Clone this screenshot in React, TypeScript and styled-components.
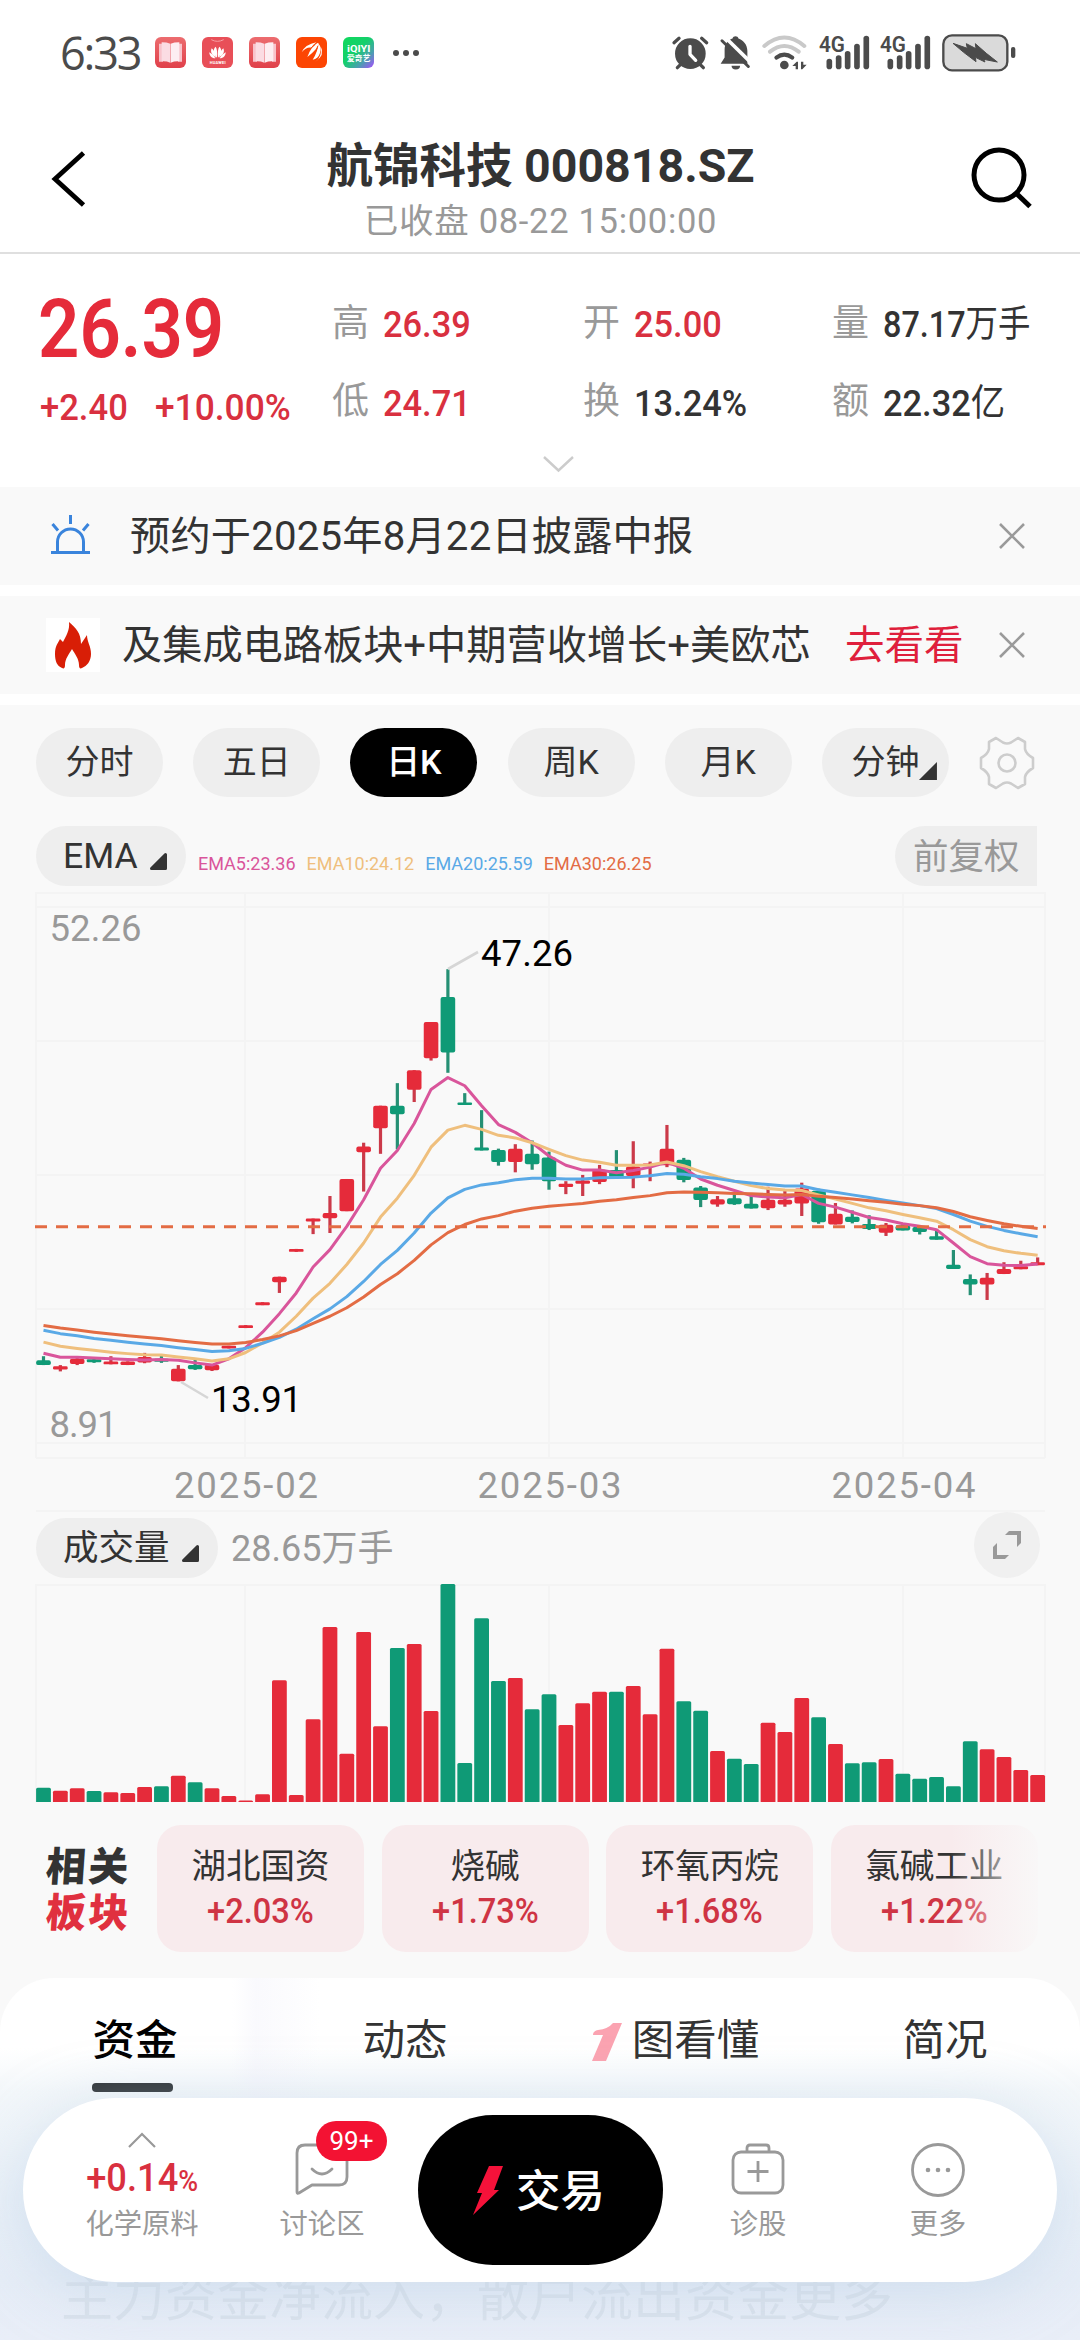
import React from 'react';
import styled, { createGlobalStyle } from 'styled-components';

const RED = '#e52b3a';
const TEXT_RED = '#d9303f';
const GREEN = '#0f9a76';
const INK = '#333';
const GRAY = '#999';
const PANEL = '#f9f9f9';
const STATUS = '#4b4b4b';

const GlobalStyle = createGlobalStyle`
  * { box-sizing: border-box; }
  body {
    margin: 0;
    background: #fff;
    font-family: Roboto, "Noto Sans CJK SC", sans-serif;
    color: ${INK};
  }
  svg { display: block; flex: none; overflow: visible; }
`;

const Screen = styled.div`
  position: relative;
  width: 1080px;
  height: 2340px;
  overflow: hidden;
  display: flex;
  flex-direction: column;
  background: #fff;
  white-space: nowrap;
`;

/* ---------- status bar ---------- */

const StatusBar = styled.div`
  height: 105px;
  flex: none;
  display: flex;
  align-items: center;
  padding: 0 64px 0 60px;
`;

const Clock = styled.div`
  width: 95px;
  font: 500 45px/60px "Open Sans", sans-serif;
  letter-spacing: -2.2px;
  color: ${STATUS};
`;

const AppIcons = styled.div`
  display: flex;
  gap: 16px;
`;

const MoreDots = styled.div`
  display: flex;
  gap: 4px;
  margin: 0 auto 0 19px;
  i { width: 6px; height: 6px; border-radius: 50%; background: ${STATUS}; }
`;

const SystemIcons = styled.div`
  display: flex;
  align-items: center;
  gap: 11.4px;
`;

const BookIcon = () => (
  <svg width="31" height="31" viewBox="0 0 93 93">
    <defs>
      <linearGradient id="book" x2="0" y2="1">
        <stop offset="0" stopColor="#ec6c6f" />
        <stop offset="1" stopColor="#e0404a" />
      </linearGradient>
    </defs>
    <rect width="93" height="93" rx="18" fill="url(#book)" />
    <path d="M12 20h12v54H12zM69 20h12v54H69z" fill="#f8c3cb" />
    <path d="M20 16q16 0 26 4v57q-12-5-26-4z" fill="#fbdce3" />
    <path d="M73 16q-16 0-26 4v57q12-5 26-4z" fill="#fdeef2" />
  </svg>
);

const HuaweiIcon = () => (
  <svg width="31" height="31" viewBox="0 0 93 93">
    <rect width="93" height="93" rx="18" fill="#e84f58" />
    <path d="M28 8q18 10 37 0" fill="none" stroke="#f6a0a4" strokeWidth="3" />
    <g fill="#fff">
      <path d="M45 62C34 50 32 36 41 29q6 8 4 33zM48 62C59 50 61 36 52 29q-6 8-4 33z" />
      <path d="M42 62C30 54 24 46 29 34q10 8 13 28zM51 62C63 54 69 46 64 34q-10 8-13 28z" />
      <path d="M40 64C28 64 22 56 22 46q12 6 18 18zM53 64C65 64 71 56 71 46q-12 6-18 18z" />
    </g>
    <text x="23" y="80" fontSize="12" fontWeight="700" fill="#fff" textLength="48">HUAWEI</text>
  </svg>
);

const BrokerIcon = () => (
  <svg width="31" height="31" viewBox="0 0 93 93">
    <rect width="93" height="93" rx="18" fill="#fc4503" />
    <g fill="#fff">
      <path d="M17 46Q28 22 61 16Q50 24 46 32Q30 30 17 46z" />
      <path d="M34 60Q46 26 66 17Q72 22 60 36Q48 50 34 60z" />
      <path d="M50 68Q66 42 67 20Q78 30 72 48Q66 66 50 68z" />
      <path d="M58 75Q80 58 74 28Q88 54 58 75z" />
    </g>
    <path d="M30 54Q42 32 58 22M46 64Q60 46 66 26" stroke="#fc4503" strokeWidth="3" fill="none" />
  </svg>
);

const IqiyiIcon = () => (
  <svg width="31" height="31" viewBox="0 0 93 93">
    <defs>
      <linearGradient id="iqiyi" x2="1" y2="1">
        <stop offset="0" stopColor="#10d95c" />
        <stop offset=".45" stopColor="#14cf6c" />
        <stop offset=".72" stopColor="#4a9fb0" />
        <stop offset="1" stopColor="#a94bff" />
      </linearGradient>
    </defs>
    <rect width="93" height="93" rx="18" fill="url(#iqiyi)" />
    <text x="12" y="44" fontSize="29" fontWeight="700" fill="#fff" textLength="70" lengthAdjust="spacingAndGlyphs">iQIYI</text>
    <text x="12" y="72" fontSize="23" fontWeight="700" fill="#fff" textLength="70">爱奇艺</text>
  </svg>
);

const ClockAlarmIcon = () => (
  <svg width="36.7" height="35.3" viewBox="50 44 110 106" fill="none" stroke={STATUS} strokeWidth="10" strokeLinecap="round">
    <circle cx="105" cy="100" r="46" fill={STATUS} stroke="none" />
    <path d="M104 78v24l17 18" stroke="#fff" strokeLinejoin="round" />
    <path d="M56 67l15-13M139 54l15 13M66 142l10-10M144 142l-10-10" />
  </svg>
);

const MuteIcon = () => (
  <svg width="31" height="35.3" viewBox="194 44 94 106">
    <path d="M196 131l12-19V86c0-16 12-28 24-32 2-9 16-9 18 0 14 5 27 18 27 38v39z" fill={STATUS} />
    <path d="M208 49l90 88" stroke="#fff" strokeWidth="11" />
    <path d="M200 61l80 78" stroke={STATUS} strokeWidth="9" strokeLinecap="round" />
    <path d="M229 137h26a13 11 0 0 1-26 0z" fill={STATUS} />
  </svg>
);

const WifiIcon = () => (
  <svg width="45" height="35.3" viewBox="320 42 135 106" fill="none" strokeWidth="12" strokeLinecap="round">
    <path d="M327 75Q387 24 447 75M344 92Q387 58 430 92" stroke="#c9c9c9" />
    <path d="M363 110Q387 92 411 110" stroke={STATUS} />
    <circle cx="387" cy="132" r="13" fill={STATUS} />
    <path d="M411 135l13-13h4v23h-7v-10zM454 131l-13 14h-4v-23h7v9z" fill={STATUS} />
  </svg>
);

const SignalIcon = () => (
  <svg width="50.3" height="35.3" viewBox="488 42 151 106" fill={STATUS}>
    <text x="488" y="93" fontSize="66" fontWeight="600" textLength="78" lengthAdjust="spacingAndGlyphs">4G</text>
    {[[519, 113], [547, 103], [574, 90], [602, 68], [630, 44]].map(([x, y]) => (
      <rect key={x} x={x - 8.5} y={y} width="17" height={145 - y} rx="8.5" />
    ))}
  </svg>
);

const BatteryIcon = () => (
  <svg width="74" height="38" viewBox="860 38 222 114">
    <rect x="864" y="42" width="192" height="105" rx="26" fill="#dadada" stroke={STATUS} strokeWidth="7" />
    <rect x="1067" y="77" width="13" height="33" rx="6" fill={STATUS} />
    <path d="M893 66l43 15-3-14 29 15-2-15 33 29 33 26-41-8 4 8-29-14 2 13-37-28z" fill={STATUS} stroke={STATUS} strokeWidth="3" />
  </svg>
);

/* ---------- header ---------- */

const Header = styled.header`
  height: 149px;
  flex: none;
  display: flex;
  justify-content: space-between;
  align-items: flex-start;
  padding: 36px 47px 0 47px;
  border-bottom: 2px solid #dfdfdf;
`;

const Titles = styled.div`
  display: flex;
  flex-direction: column;
  align-items: center;
  margin-left: 23px;
`;

const Title = styled.h1`
  margin: 0;
  font-size: 46.5px;
  line-height: 50px;
  font-weight: 700;
`;

const SubTitle = styled.div`
  margin-top: 10px;
  font-size: 34.5px;
  line-height: 40px;
  letter-spacing: 0.7px;
  color: ${GRAY};
`;

/* ---------- quote ---------- */

const Quote = styled.section`
  height: 233px;
  flex: none;
  display: flex;
  flex-direction: column;
  padding-top: 32px;
`;

const QuoteRow = styled.div`
  display: flex;
  padding-left: 40px;
  height: 157px;
`;

const PriceBlock = styled.div`
  width: 292px;
  padding-top: 4px;
  color: ${TEXT_RED};
  font-weight: 500;
`;

const Narrow = styled.span<{ $x?: number }>`
  display: inline-block;
  transform: scaleX(${p => p.$x ?? 0.93});
  transform-origin: 0 50%;
`;

const Price = styled.div`
  margin-left: -2px;
  font-size: 81px;
  line-height: 80px;
  font-weight: 600;
  color: ${RED};
`;

const Change = styled.div`
  margin-top: 18px;
  display: flex;
  font-size: 37px;
  line-height: 40px;
  span:first-child { width: 115px; }
`;

const Stats = styled.div`
  display: grid;
  grid-template-columns: 251px 249px 247px;
  grid-template-rows: 78.5px 78.5px;
`;

const Stat = styled.div<{ $up?: boolean }>`
  display: flex;
  align-items: center;
  font-size: 37px;
  line-height: 50px;
  font-weight: 500;
  color: ${p => (p.$up ? TEXT_RED : INK)};
`;

const StatLabel = styled.span`
  width: 51px;
  padding-bottom: 3px;
  font-size: 37px;
  font-weight: 400;
  color: ${GRAY};
`;

const Unit = styled.span`
  font-weight: 400;
`;

const ExpandArrow = styled.div`
  display: flex;
  padding: 12px 0 0 543px;
`;

/* ---------- notices ---------- */

const Notice = styled.div`
  height: 98px;
  flex: none;
  display: flex;
  align-items: center;
  padding: 0 55px 0 46px;
  margin-bottom: 11px;
  background: ${PANEL};
`;

const NoticeIcon = styled.div<{ $white?: boolean; $space: number }>`
  width: 54px;
  height: 54px;
  display: flex;
  align-items: center;
  justify-content: ${p => (p.$white ? 'center' : 'flex-start')};
  padding-left: ${p => (p.$white ? 0 : 5)}px;
  margin-right: ${p => p.$space}px;
  background: ${p => (p.$white ? '#fff' : 'transparent')};
`;

const NoticeText = styled.div<{ $w: number; $track?: number }>`
  width: ${p => p.$w}px;
  font-size: 40.2px;
  line-height: 57px;
  letter-spacing: ${p => p.$track ?? 0}px;
`;

const NoticeLink = styled.a`
  margin-left: 35px;
  font-size: 39.5px;
  line-height: 57px;
  color: #df1f3c;
`;

const CloseSvg = styled.svg`
  margin-left: auto;
`;

const CloseIcon = () => (
  <CloseSvg width="26" height="28" viewBox="0 0 26 28" stroke="#9a9a9a" strokeWidth="2.6">
    <path d="M1 2l24 24M25 2L1 26" />
  </CloseSvg>
);

/* ---------- chart ---------- */

const ChartPanel = styled.section`
  flex: none;
  height: 1273px;
  display: flex;
  flex-direction: column;
  padding-top: 23px;
  background: ${PANEL};
`;

const Periods = styled.div`
  display: flex;
  align-items: center;
  gap: 30.2px;
  padding-left: 36px;
`;

const Period = styled.div<{ $active?: boolean }>`
  position: relative;
  width: 127px;
  height: 69px;
  border-radius: 35px;
  text-align: center;
  font-size: 34px;
  line-height: 69px;
  font-weight: ${p => (p.$active ? 500 : 400)};
  color: ${p => (p.$active ? '#fff' : INK)};
  background: ${p => (p.$active ? '#000' : '#eee')};
`;

const Corner = styled.i`
  position: absolute;
  right: 12px;
  bottom: 17px;
  width: 18px;
  height: 18px;
  background: ${INK};
  clip-path: polygon(100% 0, 100% 100%, 0 100%);
`;

const ToolRow = styled.div`
  display: flex;
  align-items: center;
  height: 60px;
  margin: 29px 43px 6px 36px;
`;

const Picker = styled.div<{ $w: number; $top?: number }>`
  width: ${p => p.$w}px;
  height: 60px;
  margin-top: ${p => p.$top ?? 0}px;
  border-radius: 30px;
  display: flex;
  align-items: center;
  justify-content: space-between;
  padding: 0 18px 0 27px;
  font-size: 35.5px;
  line-height: 61px;
  background: #eee;
  svg { margin-top: 11px; }
`;

const Legend = styled.div`
  display: flex;
  gap: 11px;
  margin-left: 12px;
  padding-top: 15px;
  font-size: 18px;
  line-height: 20px;
`;

const LegendItem = styled.span<{ $c: string }>`
  color: ${p => p.$c};
`;

const Adjust = styled.div`
  margin-left: auto;
  width: 142px;
  height: 60px;
  padding-left: 18px;
  border-radius: 30px 0 0 30px;
  font-size: 35.5px;
  line-height: 63px;
  color: ${GRAY};
  background: #eee;
`;

const VolumeRow = styled.div`
  display: flex;
  align-items: flex-start;
  height: 72px;
  padding: 0 40px 0 36px;
`;

const VolumeValue = styled.div`
  margin: 7px 0 0 13px;
  font-size: 36px;
  line-height: 61px;
  color: ${GRAY};
`;

const FullScreen = styled.div`
  width: 66px;
  height: 66px;
  margin-left: auto;
  border-radius: 50%;
  display: flex;
  align-items: center;
  justify-content: center;
  background: #f0f0f0;
`;

const TriangleMark = () => (
  <svg width="18" height="18" viewBox="0 0 18 18">
    <path d="M15.5 1.5v14h-14z" fill={INK} stroke={INK} strokeWidth="3" strokeLinejoin="round" />
  </svg>
);

// [direction, high, body top, body bottom, low], all in plot units measured downwards
type Candle = [1 | 0, number, number, number, number];
const CANDLES: Candle[] = [
  [0, 1233, 1244, 1257, 1257], [1, 1257, 1260, 1269, 1274], [1, 1238, 1240, 1254, 1257], [0, 1236, 1241, 1249, 1251],
  [1, 1233, 1247, 1255, 1255], [1, 1247, 1247, 1257, 1257], [1, 1224, 1235, 1250, 1252], [0, 1230, 1240, 1248, 1251],
  [1, 1257, 1267, 1301, 1301], [0, 1239, 1257, 1268, 1270], [1, 1255, 1256, 1271, 1273], [1, 1205, 1205, 1212, 1212],
  [1, 1149, 1149, 1157, 1157], [1, 1087, 1087, 1095, 1095], [1, 1018, 1018, 1033, 1062], [1, 943, 943, 951, 951],
  [1, 861, 861, 869, 903], [1, 800, 846, 860, 900], [1, 754, 754, 841, 841], [1, 656, 666, 682, 788],
  [1, 556, 556, 617, 686], [0, 495, 556, 579, 674], [1, 460, 460, 513, 546], [1, 330, 330, 428, 434],
  [0, 187, 262, 412, 467], [0, 522, 547, 554, 554], [0, 568, 669, 677, 677], [0, 672, 676, 708, 718],
  [1, 660, 672, 708, 736], [0, 650, 686, 714, 729], [0, 680, 696, 760, 783], [1, 760, 767, 776, 795],
  [1, 743, 758, 767, 800], [1, 716, 729, 762, 768], [0, 676, 730, 750, 752], [1, 652, 720, 746, 779],
  [1, 707, 712, 718, 760], [1, 608, 672, 717, 722], [0, 697, 702, 757, 763], [0, 773, 777, 811, 830],
  [1, 800, 809, 823, 829], [0, 797, 806, 822, 824], [0, 800, 821, 834, 834], [1, 775, 810, 833, 838],
  [1, 781, 810, 823, 829], [1, 764, 780, 820, 854], [0, 780, 786, 871, 875], [1, 819, 848, 877, 877],
  [0, 839, 856, 870, 874], [0, 852, 876, 889, 892], [1, 873, 878, 899, 908], [0, 878, 879, 893, 893],
  [0, 883, 884, 897, 904], [0, 893, 909, 918, 918], [0, 946, 986, 997, 997], [0, 1012, 1024, 1039, 1068],
  [1, 1008, 1021, 1039, 1081], [1, 979, 997, 1011, 1011], [1, 975, 990, 998, 998], [1, 966, 979, 987, 987],
];

const EMA5 = [1225, 1236, 1236, 1238, 1240, 1242, 1243, 1242, 1244, 1251, 1257, 1240, 1210, 1168, 1118, 1062, 992, 945, 882, 810,
  725, 677, 604, 512, 480, 502, 556, 607, 628, 656, 692, 717, 730, 730, 737, 731, 722, 709, 725, 754,
  771, 785, 799, 803, 805, 796, 820, 830, 844, 858, 865, 875, 882, 891, 927, 964, 983, 987, 988, 984];
const EMA10 = [1195, 1206, 1212, 1217, 1222, 1226, 1229, 1230, 1235, 1240, 1246, 1240, 1223, 1197, 1168, 1125, 1076, 1036, 985, 927,
  857, 806, 744, 668, 622, 609, 620, 636, 643, 656, 674, 691, 703, 709, 717, 717, 716, 708, 718, 734,
  748, 760, 772, 780, 784, 785, 797, 808, 820, 832, 840, 850, 859, 868, 891, 918, 937, 948, 955, 960];
const EMA20 = [1163, 1172, 1178, 1185, 1190, 1195, 1200, 1204, 1210, 1215, 1220, 1218, 1212, 1198, 1182, 1160, 1132, 1105, 1072, 1031,
  985, 947, 900, 846, 805, 782, 770, 764, 756, 752, 752, 754, 754, 751, 750, 749, 745, 739, 741, 748,
  753, 760, 765, 769, 773, 773, 783, 790, 797, 804, 812, 819, 826, 834, 850, 868, 882, 893, 902, 910];
const EMA30 = [1150, 1157, 1162, 1168, 1173, 1178, 1182, 1186, 1191, 1196, 1200, 1200, 1196, 1188, 1178, 1164, 1144, 1125, 1102, 1073,
  1039, 1010, 974, 932, 899, 877, 862, 853, 841, 833, 828, 824, 820, 814, 810, 804, 799, 791, 789, 790,
  791, 793, 794, 796, 797, 796, 801, 804, 808, 813, 817, 822, 826, 832, 842, 856, 866, 875, 882, 888];

const LINES: [string, string, number[]][] = [
  ['EMA5:23.36', '#d9559b', EMA5],
  ['EMA10:24.12', '#efbf7d', EMA10],
  ['EMA20:25.59', '#5aa9e6', EMA20],
  ['EMA30:26.25', '#e36c44', EMA30],
];

const VOLUMES = [14.3, 11.3, 13.7, 11, 9.7, 9, 15, 15.7, 26.3, 19.7, 13.7, 6, 1.5, 7.7, 121.7, 7, 82.7, 175, 48.3, 170,
  75.7, 154, 158, 91, 218, 39, 183.7, 121, 124, 92.7, 107.7, 77, 98.7, 110.3, 110.3, 116, 87.7, 153.3, 100.7, 91.3,
  51, 43.3, 38, 79.3, 70, 104, 84.7, 58, 38.7, 39.7, 43, 28.3, 23.3, 25, 15.7, 60.7, 52.7, 45, 32, 27];

const cx = (i: number) => 43.5 + i * 16.85;
const py = (v: number) => 8 + v * 0.37;
const MONTH_X = [245, 549, 903];

const KChart = () => (
  <svg width="1080" height="620" viewBox="0 0 1080 620">
    <g stroke="#f4f4f4" strokeWidth="2">
      {[1, 15, 149, 283, 417, 551, 566, 619].map(y => <path key={y} d={`M36 ${y}H1045`} />)}
      {[36, ...MONTH_X, 1045].map(x => <path key={x} d={`M${x} 0V566`} />)}
    </g>
    {CANDLES.map(([up, hi, top, bot, lo], i) => {
      const c = up ? RED : GREEN;
      return (
        <g key={i} fill={c}>
          <rect x={cx(i) - 1.6} y={py(hi)} width="3.2" height={py(lo) - py(hi)} fill={up ? '#cb3a49' : '#259074'} />
          <rect x={cx(i) - 7.3} y={py(top)} width="14.6" height={py(bot) - py(top)} rx={Math.min(2, (bot - top) * 0.15)} />
        </g>
      );
    })}
    {LINES.map(([name, color, pts]) => (
      <polyline key={name} points={pts.map((v, i) => `${cx(i)},${py(v)}`).join(' ')} fill="none" stroke={color} strokeWidth="3" strokeLinejoin="round" />
    ))}
    <path d="M35 334.7H1046" stroke="#e36c44" strokeWidth="3" strokeDasharray="12 9" />
    <path d="M448 77l30-17M181 490l27 16" stroke="#d6d6d6" strokeWidth="2.6" />
    <g fontSize="36.5">
      <g fill={GRAY}>
        <text x="49.500" y="48.500" textLength="92">52.26</text>
        <text x="49.500" y="545" textLength="68">8.91</text>
        <text x="246" y="606" textAnchor="middle" textLength="144">2025-02</text>
        <text x="549.500" y="606" textAnchor="middle" textLength="144">2025-03</text>
        <text x="903.500" y="606" textAnchor="middle" textLength="144">2025-04</text>
      </g>
      <g fill="#000">
        <text x="481" y="73.500" textLength="92">47.26</text>
        <text x="211" y="519.500" textLength="91">13.91</text>
      </g>
    </g>
  </svg>
);

const VolumeChart = () => (
  <svg width="1080" height="218" viewBox="0 0 1080 218">
    <g stroke="#f4f4f4" strokeWidth="2">
      <path d="M36 1H1045" />
      {[36, ...MONTH_X, 1045].map(x => <path key={x} d={`M${x} 0V218`} />)}
    </g>
    {VOLUMES.map((h, i) => (
      <path
        key={i}
        d={`M${cx(i) - 7.4} 218V${219.5 - h}q0-1.5 1.5-1.5h11.8q1.5 0 1.5 1.5V218z`}
        fill={CANDLES[i][0] ? RED : GREEN}
      />
    ))}
  </svg>
);

/* ---------- related sectors ---------- */

const Sectors = styled.div`
  position: relative;
  display: flex;
  height: 127px;
  margin-top: 23px;
  padding-left: 46px;
  overflow: hidden;
  &::after {
    content: '';
    position: absolute;
    inset: 0 0 0 auto;
    width: 130px;
    background: linear-gradient(90deg, rgba(249, 249, 249, 0), ${PANEL} 78%);
  }
`;

const SectorTitle = styled.div`
  width: 111px;
  flex: none;
  padding-top: 20px;
  font-size: 40px;
  line-height: 46px;
  font-weight: 900;
  letter-spacing: 2.4px;
`;

const SectorTitleLine = styled.div<{ $c: string }>`
  width: 84px;
  transform: skewX(-4deg);
  color: ${p => p.$c};
`;

const SectorCard = styled.div`
  width: 207px;
  flex: none;
  margin-right: 17.6px;
  border-radius: 24px;
  padding-top: 19px;
  text-align: center;
  background: #f8ebed;
`;

const SectorName = styled.div`
  font-size: 34.5px;
  line-height: 44px;
`;

const SectorChange = styled.div`
  font-size: 34.5px;
  line-height: 47px;
  font-weight: 500;
  color: #cf3444;
  span { transform-origin: 50% 50%; }
`;

const SECTORS = [['湖北国资', '+2.03%'], ['烧碱', '+1.73%'], ['环氧丙烷', '+1.68%'], ['氯碱工业', '+1.22%'], ['', '']];

/* ---------- bottom sheet ---------- */

const SheetBack = styled.section`
  flex: none;
  height: 362px;
  background: ${PANEL};
`;

const Sheet = styled.div`
  position: relative;
  height: 100%;
  overflow: hidden;
  border-radius: 54px 54px 0 0;
  background: linear-gradient(#fff 0, #fff 70px, #f3f7fa 115px, #e9f0f8 220px, #e6edf7 300px, #e9eef8 100%);
`;

const SheetTabs = styled.div`
  display: grid;
  grid-template-columns: repeat(4, 270px);
  height: 120px;
  background: linear-gradient(90deg, rgba(245,245,252,0) 232px, rgba(243,243,251,.45) 256px, rgba(250,250,254,0) 320px);
`;

const SheetTab = styled.div<{ $active?: boolean }>`
  position: relative;
  display: flex;
  justify-content: center;
  padding-top: 35px;
  font-size: 42.5px;
  line-height: 56px;
  font-weight: ${p => (p.$active ? 500 : 400)};
  color: ${p => (p.$active ? '#000' : INK)};
  svg { margin: 9px 8px 0 0; }
`;

const Underline = styled.i`
  position: absolute;
  left: 92px;
  top: 105px;
  width: 81px;
  height: 9px;
  border-radius: 4px;
  background: #2f3336;
`;

const Ghost = styled.div`
  padding: 161px 0 0 61px;
  font-size: 52px;
  line-height: 80px;
  color: #dae2ec;
`;

const Nav = styled.nav`
  position: absolute;
  left: 23px;
  top: 2098px;
  width: 1034px;
  height: 184px;
  border-radius: 92px;
  display: grid;
  grid-template-columns: 178px 182px 250px 190px 170px;
  padding-left: 30px;
  background: #fff;
  box-shadow: 0 10px 60px rgba(185, 208, 230, 0.5);
`;

const NavItem = styled.div`
  position: relative;
  display: flex;
  flex-direction: column;
  align-items: center;
  justify-content: space-between;
  padding: 34px 0 40px;
`;

const NavLabel = styled.div`
  font-size: 28.3px;
  line-height: 34px;
  color: ${GRAY};
`;

const NavIcon = styled.div`
  display: flex;
  padding-top: 11px;
`;

const IndexChange = styled.div`
  font-size: 39px;
  line-height: 40px;
  font-weight: 500;
  color: ${TEXT_RED};
  margin: 2px -10px 0;
  small { font-size: 29px; }
  > span { transform-origin: 50% 50%; }
`;

const Badge = styled.div`
  position: absolute;
  left: 85px;
  top: 23px;
  width: 71px;
  height: 40px;
  border-radius: 20px;
  font: 400 26px/40px Roboto, sans-serif;
  text-align: center;
  color: #fff;
  background: #f31233;
`;

const TradeButton = styled.div`
  width: 245px;
  height: 150px;
  margin: 17px 0 0 5px;
  border-radius: 75px;
  display: flex;
  align-items: center;
  padding-left: 55px;
  font-size: 44.5px;
  font-weight: 500;
  color: #fff;
  background: #000;
  span { margin: -6px 0 0 13px; }
`;

export default function App() {
  return (
    <Screen>
      <GlobalStyle />
      <StatusBar>
        <Clock>6:33</Clock>
        <AppIcons><BookIcon /><HuaweiIcon /><BookIcon /><BrokerIcon /><IqiyiIcon /></AppIcons>
        <MoreDots><i /><i /><i /></MoreDots>
        <SystemIcons><ClockAlarmIcon /><MuteIcon /><WifiIcon /><SignalIcon /><SignalIcon /><BatteryIcon /></SystemIcons>
      </StatusBar>

      <Header>
        <svg width="40" height="76" viewBox="0 0 40 76" fill="none" stroke="#000" strokeWidth="4.8">
          <path d="M36.500 12L8 38l28.500 26" />
        </svg>
        <Titles>
          <Title>航锦科技 000818.SZ</Title>
          <SubTitle>已收盘 08-22 15:00:00</SubTitle>
        </Titles>
        <svg width="62" height="72" viewBox="0 0 62 72" fill="none" stroke="#000" strokeWidth="5">
          <circle cx="28" cy="34" r="25" />
          <path d="M45.500 52.500l13.500 13" />
        </svg>
      </Header>

      <Quote>
        <QuoteRow>
          <PriceBlock>
            <Price><Narrow $x={0.895}>26.39</Narrow></Price>
            <Change><Narrow $x={0.935}>+2.40</Narrow><Narrow $x={0.955}>+10.00%</Narrow></Change>
          </PriceBlock>
          <Stats>
            <Stat $up><StatLabel>高</StatLabel><Narrow>26.39</Narrow></Stat>
            <Stat $up><StatLabel>开</StatLabel><Narrow>25.00</Narrow></Stat>
            <Stat><StatLabel>量</StatLabel><Narrow $x={0.875}>87.17<Unit>万手</Unit></Narrow></Stat>
            <Stat $up><StatLabel>低</StatLabel><Narrow>24.71</Narrow></Stat>
            <Stat><StatLabel>换</StatLabel><Narrow>13.24%</Narrow></Stat>
            <Stat><StatLabel>额</StatLabel><Narrow>22.32<Unit>亿</Unit></Narrow></Stat>
          </Stats>
        </QuoteRow>
        <ExpandArrow>
          <svg width="31" height="18" viewBox="0 0 31 18" fill="none" stroke="#ccc" strokeWidth="2.4">
            <path d="M1 2l14.500 13.500L30 2" />
          </svg>
        </ExpandArrow>
      </Quote>

      <Notice>
        <NoticeIcon $space={30}>
          <svg width="40" height="42" viewBox="0 0 40 42" fill="none" stroke="#3a84dc" strokeWidth="3">
            <path d="M0 37.500h39M6.500 37V27a13 13 0 0 1 26 0v10M19.500 0v9M1.500 9l5.500 6.500M37.500 9L32 15.500" />
          </svg>
        </NoticeIcon>
        <NoticeText $w={600} $track={0.2}>预约于2025年8月22日披露中报</NoticeText>
        <CloseIcon />
      </Notice>
      <Notice>
        <NoticeIcon $white $space={22}>
          <svg width="38" height="50" viewBox="0 0 38 50">
            <path d="M15 2C22 8 27 13 27 24L33 15C33 22 37 26 37 34 37 41 33 46 28 48 26 49 25 48 25 45 25 39 21 34 18 29 15 34 11 39 11 45 11 48 10 49 8 48 3 46 1 41 1 34 1 26 4 23 6 19L9 22C12 16 16 10 15 2z" fill="#d81e06" />
          </svg>
        </NoticeIcon>
        <NoticeText $w={688}>及集成电路板块+中期营收增长+美欧芯</NoticeText>
        <NoticeLink>去看看</NoticeLink>
        <CloseIcon />
      </Notice>

      <ChartPanel>
        <Periods>
          <Period>分时</Period>
          <Period>五日</Period>
          <Period $active>日K</Period>
          <Period>周K</Period>
          <Period>月K</Period>
          <Period>分钟<Corner /></Period>
          <svg width="56" height="56" viewBox="-28 -28 56 56" fill="none" stroke="#cdcdcd" strokeWidth="2.6" strokeLinejoin="round">
            <path d="M-11-25L-4-20.500Q0-18.500 4-20.500L11-25 18-21V-14Q19-9 26-5V5Q19 9 18 14V21L11 25 4 20.500Q0 18.500-4 20.500L-11 25-18 21V14Q-19 9-26 5V-5Q-19-9-18-14V-21z" />
            <circle r="8.500" />
          </svg>
        </Periods>
        <ToolRow>
          <Picker $w={150}>EMA<TriangleMark /></Picker>
          <Legend>
            {LINES.map(([name, color]) => <LegendItem key={name} $c={color}>{name}</LegendItem>)}
          </Legend>
          <Adjust>前复权</Adjust>
        </ToolRow>
        <KChart />
        <VolumeRow>
          <Picker $w={182} $top={6}>成交量<TriangleMark /></Picker>
          <VolumeValue>28.65万手</VolumeValue>
          <FullScreen>
            <svg width="30" height="30" viewBox="0 0 30 30" fill={GRAY}>
              <path d="M13 5l4-4h12v12l-4 4V5zM5 13L1 17v12h12l4-4H5z" />
            </svg>
          </FullScreen>
        </VolumeRow>
        <VolumeChart />
        <Sectors>
          <SectorTitle>
            <SectorTitleLine $c="#333">相关</SectorTitleLine>
            <SectorTitleLine $c="#e0303f">板块</SectorTitleLine>
          </SectorTitle>
          {SECTORS.map(([name, change], i) => (
            <SectorCard key={i}>
              <SectorName>{name}</SectorName>
              <SectorChange><Narrow $x={0.945}>{change}</Narrow></SectorChange>
            </SectorCard>
          ))}
        </Sectors>
      </ChartPanel>

      <SheetBack>
        <Sheet>
          <SheetTabs>
            <SheetTab $active>资金<Underline /></SheetTab>
            <SheetTab>动态</SheetTab>
            <SheetTab>
              <svg width="33" height="40" viewBox="0 0 33 40">
                <path d="M31 1L15 39H1L12 13H2Q2 9 7 8 17 7 22 1z" fill="#fba3b1" />
              </svg>
              图看懂
            </SheetTab>
            <SheetTab>简况</SheetTab>
          </SheetTabs>
          <Ghost>主力资金净流入，散户流出资金更多</Ghost>
        </Sheet>
      </SheetBack>

      <Nav>
        <NavItem>
          <svg width="28" height="16" viewBox="0 0 28 16" fill="none" stroke="#999" strokeWidth="2.200">
            <path d="M1 15L14 2l13 13" />
          </svg>
          <IndexChange><Narrow>+0.14<small>%</small></Narrow></IndexChange>
          <NavLabel>化学原料</NavLabel>
        </NavItem>
        <NavItem>
          <NavIcon>
            <svg width="54" height="52" viewBox="0 0 54 52" fill="none" stroke={GRAY} strokeWidth="2.800" strokeLinejoin="round">
              <path d="M2 49V10q0-8 8-8h34q8 0 8 8v24q0 8-8 8H17L4 50q-2 1-2-1z" />
              <path d="M17 26q10 10 20 0" strokeLinecap="round" />
            </svg>
          </NavIcon>
          <Badge>99+</Badge>
          <NavLabel>讨论区</NavLabel>
        </NavItem>
        <TradeButton>
          <svg width="30" height="49" viewBox="0 0 30 49">
            <path d="M16 0H30L21 24H26L0 49 9 27H4z" fill="#f5123a" />
          </svg>
          <span>交易</span>
        </TradeButton>
        <NavItem>
          <NavIcon>
            <svg width="54" height="52" viewBox="0 0 54 52" fill="none" stroke={GRAY} strokeWidth="2.800">
              <rect x="2" y="9" width="50" height="41" rx="8" />
              <path d="M16 9V5q0-3 3-3h16q3 0 3 3v4M27 18v21M16.500 28.500h21" />
            </svg>
          </NavIcon>
          <NavLabel>诊股</NavLabel>
        </NavItem>
        <NavItem>
          <NavIcon>
            <svg width="54" height="54" viewBox="0 0 54 54" fill="none" stroke={GRAY} strokeWidth="2.800">
              <circle cx="27" cy="27" r="25.500" />
              <g fill={GRAY} stroke="none"><circle cx="17" cy="27" r="2.300" /><circle cx="27" cy="27" r="2.300" /><circle cx="37" cy="27" r="2.300" /></g>
            </svg>
          </NavIcon>
          <NavLabel>更多</NavLabel>
        </NavItem>
      </Nav>
    </Screen>
  );
}
